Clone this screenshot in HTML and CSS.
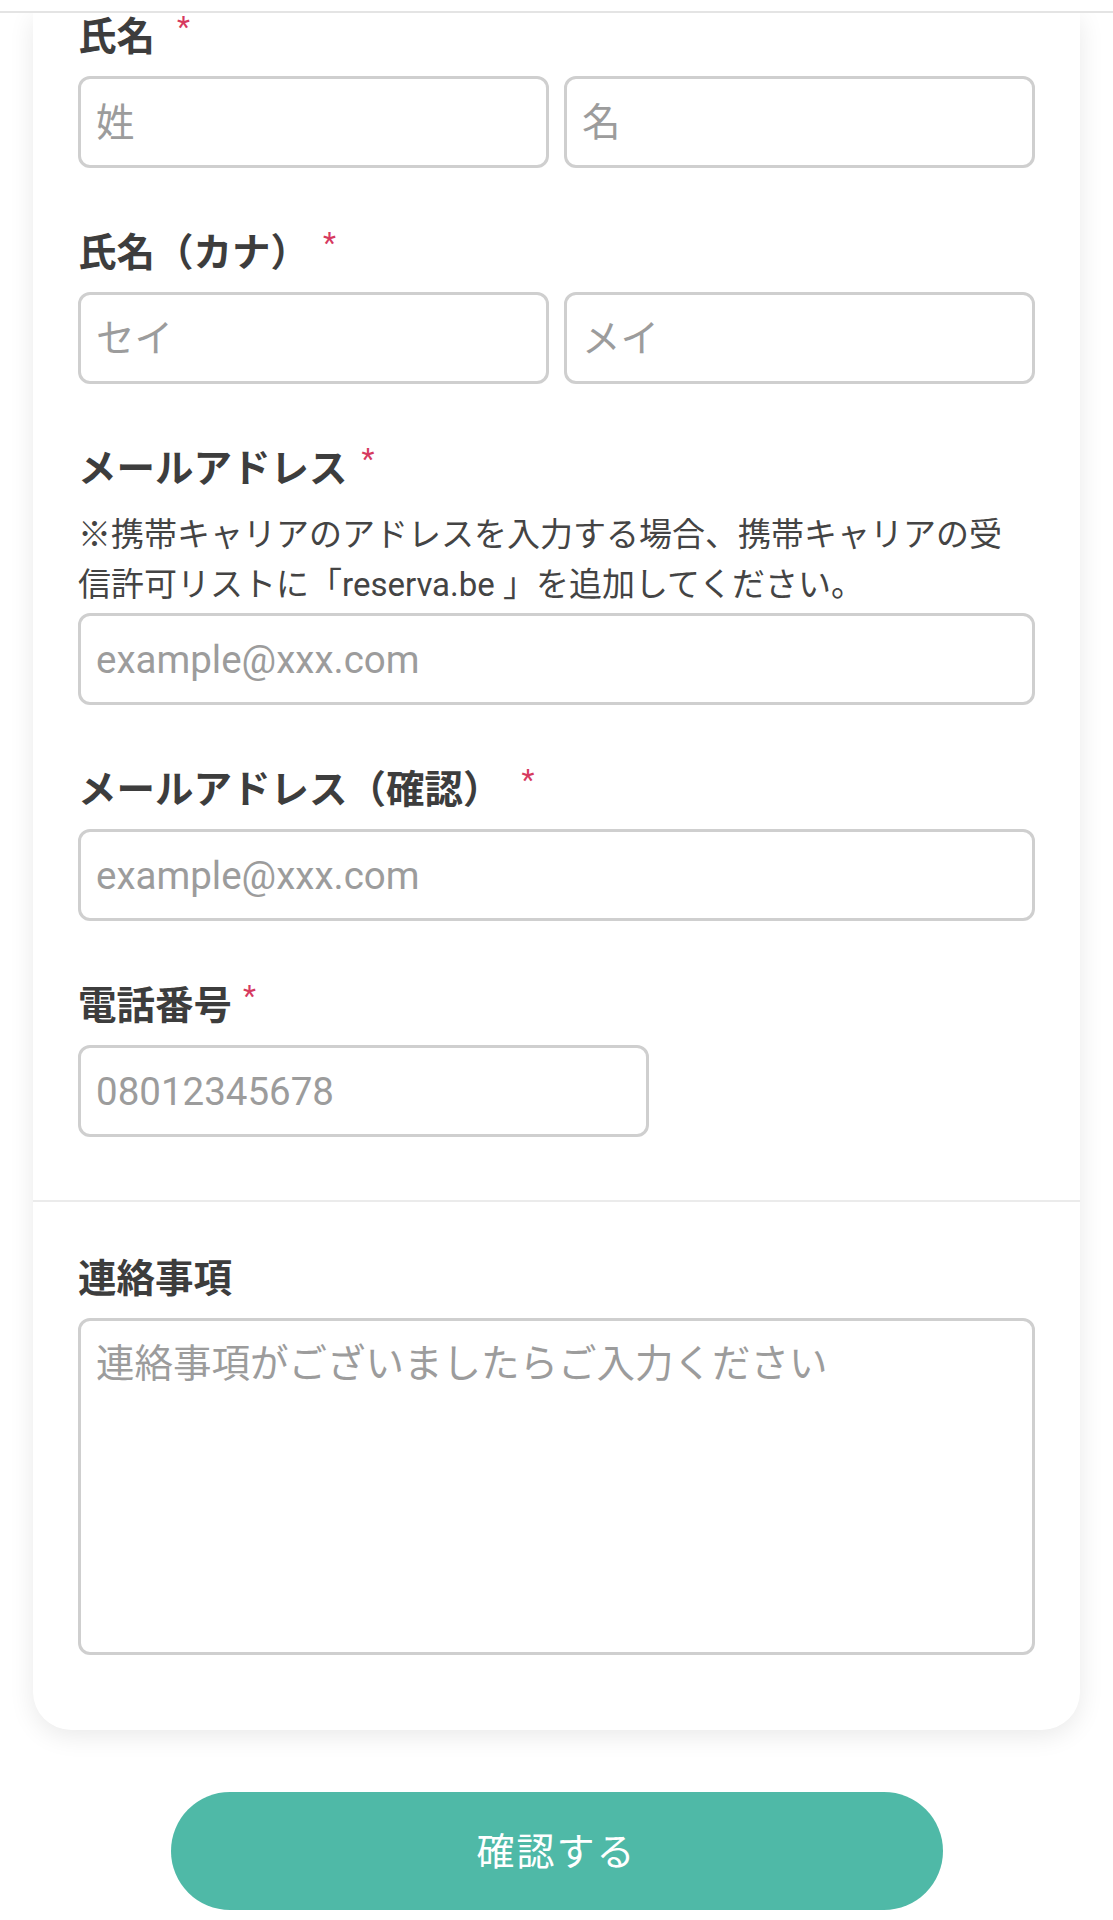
FILE: index.html
```html
<!DOCTYPE html>
<html lang="ja">
<head>
<meta charset="utf-8">
<title>予約フォーム</title>
<link rel="stylesheet" href="styles.css">
</head>
<body>
<div class="topbar"></div>
<main class="card">
  <section class="group">
    <div class="field">
      <label class="label">氏名<span class="req req-name">*</span></label>
      <div class="row2">
        <input class="input" type="text" placeholder="姓">
        <input class="input" type="text" placeholder="名">
      </div>
    </div>
    <div class="field">
      <label class="label">氏名（カナ）<span class="req req-kana">*</span></label>
      <div class="row2">
        <input class="input" type="text" placeholder="セイ">
        <input class="input" type="text" placeholder="メイ">
      </div>
    </div>
    <div class="field">
      <label class="label">メールアドレス<span class="req req-mail">*</span></label>
      <p class="note">※携帯キャリアのアドレスを入力する場合、携帯キャリアの受<br>信許可リストに「reserva.be 」を追加してください。</p>
      <input class="input" type="email" placeholder="example@xxx.com">
    </div>
    <div class="field">
      <label class="label">メールアドレス（確認）<span class="req req-confirm">*</span></label>
      <input class="input" type="email" placeholder="example@xxx.com">
    </div>
    <div class="field">
      <label class="label">電話番号<span class="req req-tel">*</span></label>
      <input class="input input-tel" type="tel" placeholder="08012345678">
    </div>
  </section>
  <div class="divider"></div>
  <section class="group group-notes">
    <div class="field">
      <label class="label">連絡事項</label>
      <textarea class="textarea" placeholder="連絡事項がございましたらご入力ください"></textarea>
    </div>
  </section>
</main>
<div class="actions">
  <button class="submit" type="button">確認する</button>
</div>
</body>
</html>
```

FILE: styles.css
```css
html, body {
  margin: 0;
  padding: 0;
  background: #ffffff;
}

body {
  font-family: Roboto, "Noto Sans CJK JP", sans-serif;
  color: #3d3d3d;
  overflow: hidden;
}

.topbar {
  position: relative;
  z-index: 2;
  height: 11px;
  background: #ffffff;
  border-bottom: 2px solid #e4e4e4;
}

.card {
  position: relative;
  z-index: 1;
  margin: 0 33px;
  background: #ffffff;
  border-radius: 0 0 38px 38px;
  box-shadow: 0 6px 26px rgba(0, 0, 0, 0.09);
}

.group {
  padding: 0 45px 63px;
}

.group-notes {
  padding-top: 51px;
  padding-bottom: 75px;
}

.field {
  display: flex;
  flex-direction: column;
  margin-bottom: 59px;
}

.field:last-child {
  margin-bottom: 0;
}

.label {
  display: block;
  font-family: "Noto Sans CJK JP", sans-serif;
  font-weight: 700;
  font-size: 38.5px;
  line-height: 44px;
  color: #3d3d3d;
  margin: 0 0 21px;
  white-space: nowrap;
}

.group > .field:first-child .label {
  margin-top: -2px;
}

.group-notes > .field:first-child .label {
  margin-top: 0;
}

.req {
  font-family: Roboto, sans-serif;
  font-weight: 400;
  font-size: 30px;
  line-height: 0;
  color: #d63a5f;
  vertical-align: 13px;
}

.req-name { margin-left: 22px; }
.req-kana { margin-left: 14px; }
.req-mail { margin-left: 14px; }
.req-confirm { margin-left: 20px; }
.req-tel { margin-left: 11px; }

.note {
  margin: 2px 0 3px;
  font-family: Roboto, "Noto Sans CJK JP", sans-serif;
  font-size: 33px;
  line-height: 50px;
  color: #444444;
  white-space: nowrap;
}

.row2 {
  display: grid;
  grid-template-columns: 1fr 1fr;
  gap: 15px;
}

.input, .textarea {
  box-sizing: border-box;
  width: 100%;
  margin: 0;
  border: 3px solid #cfcfcf;
  border-radius: 12px;
  background: #ffffff;
  font-family: Roboto, "Noto Sans CJK JP", sans-serif;
  font-size: 38.5px;
  color: #333333;
  outline: none;
}

.input {
  height: 92px;
  padding: 0 15px;
}

.input-tel {
  width: 571px;
}

.textarea {
  display: block;
  height: 337px;
  padding: 16px 15px 14px;
  line-height: 54px;
  resize: none;
}

.input::placeholder, .textarea::placeholder {
  color: #9c9c9c;
  opacity: 1;
}

.divider {
  height: 2px;
  background: #ebebeb;
}

.actions {
  display: flex;
  justify-content: center;
  padding-top: 62px;
}

.submit {
  width: 772px;
  height: 118px;
  padding: 0 0 6px;
  border: none;
  border-radius: 59px;
  background: #4fb9a7;
  color: #ffffff;
  font-family: "Noto Sans CJK JP", sans-serif;
  font-weight: 400;
  font-size: 38px;
  letter-spacing: 2px;
}
```
